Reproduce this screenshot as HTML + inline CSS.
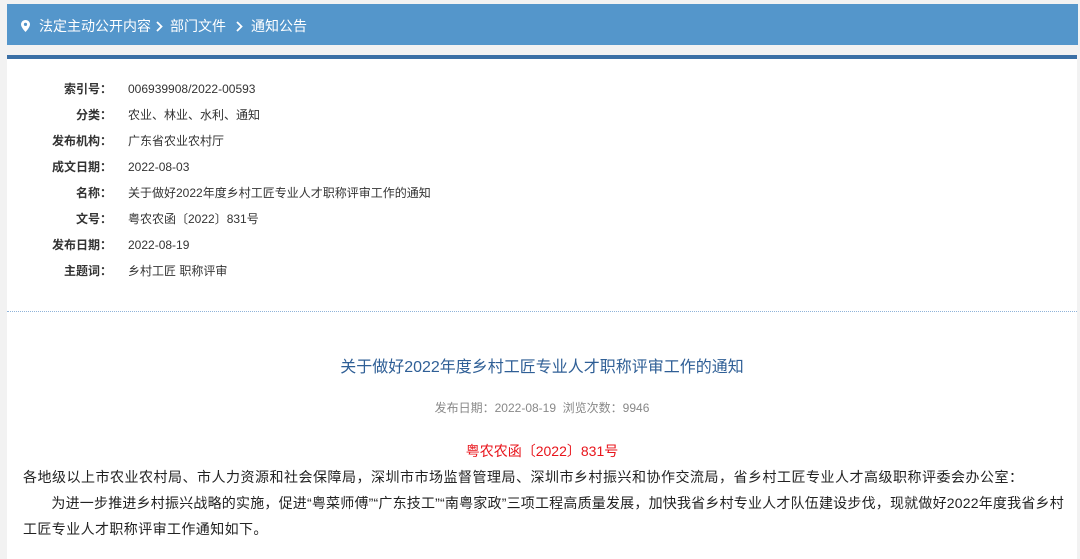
<!DOCTYPE html>
<html><head><meta charset="utf-8"><style>
body{margin:0;width:1080px;height:535px;overflow:hidden;background:#f2f2f2;font-family:"Liberation Sans","Noto Sans CJK SC",sans-serif;}
.hdr{position:absolute;left:7px;top:4px;width:1071px;height:41px;background:#5496cb;color:#fff;font-size:14px;line-height:44px;}
.hdr span{position:absolute;top:0}
.panel{position:absolute;left:7px;top:55px;width:1070px;height:500px;background:#fff;border-top:4px solid #3a6fa5;}
.lab{position:absolute;left:0;width:105px;text-align:right;font-weight:bold;color:#333;font-size:12px;line-height:16px}
.val{position:absolute;left:121px;font-size:12px;color:#333;white-space:nowrap;line-height:16px}
</style></head><body>
<div class="hdr">
<svg style="position:absolute;left:14px;top:16px" width="9" height="12" viewBox="0 0 9 12"><path d="M4.5 0C2 0 0 2 0 4.4 0 7.5 4.5 12 4.5 12S9 7.5 9 4.4C9 2 7 0 4.5 0z" fill="#fff"/><circle cx="4.5" cy="4.4" r="1.6" fill="#5496cb"/></svg>
<span style="left:32px">法定主动公开内容</span>
<svg style="position:absolute;left:149px;top:17px" width="7" height="11"><path d="M1 1l4.5 4.5L1 10" stroke="#fff" stroke-width="1.8" fill="none"/></svg>
<span style="left:163px">部门文件</span>
<svg style="position:absolute;left:229px;top:17px" width="7" height="11"><path d="M1 1l4.5 4.5L1 10" stroke="#fff" stroke-width="1.8" fill="none"/></svg>
<span style="left:244px">通知公告</span>
</div>
<div class="panel">
<div style="position:absolute;top:22px;left:0;width:1000px">
<div class="lab" style="top:0">索引号：</div><div class="val" style="top:0">006939908/2022-00593</div>
<div class="lab" style="top:26px">分类：</div><div class="val" style="top:26px">农业、林业、水利、通知</div>
<div class="lab" style="top:52px">发布机构：</div><div class="val" style="top:52px">广东省农业农村厅</div>
<div class="lab" style="top:78px">成文日期：</div><div class="val" style="top:78px">2022-08-03</div>
<div class="lab" style="top:104px">名称：</div><div class="val" style="top:104px">关于做好2022年度乡村工匠专业人才职称评审工作的通知</div>
<div class="lab" style="top:130px">文号：</div><div class="val" style="top:130px">粤农农函〔2022〕831号</div>
<div class="lab" style="top:156px">发布日期：</div><div class="val" style="top:156px">2022-08-19</div>
<div class="lab" style="top:182px">主题词：</div><div class="val" style="top:182px">乡村工匠 职称评审</div>
</div>
<div style="position:absolute;left:0;top:252px;width:1070px;border-top:1px dotted #8fb3d9"></div>
<div style="position:absolute;left:0;top:294px;width:1070px;text-align:center;font-size:16px;color:#2f5f96">关于做好2022年度乡村工匠专业人才职称评审工作的通知</div>
<div style="position:absolute;left:0;top:340px;width:1070px;text-align:center;font-size:12px;color:#888">发布日期：2022-08-19&nbsp; 浏览次数：9946</div>
<div style="position:absolute;left:0;top:382px;width:1070px;text-align:center;font-size:14px;color:#e8141b">粤农农函〔2022〕831号</div>
<div style="position:absolute;left:16px;top:405px;width:1070px;font-size:14px;color:#222;line-height:26px;white-space:nowrap"><span style="letter-spacing:0.5px">各地级以上市农业农村局、市人力资源和社会保障局，深圳市市场监督管理局、深圳市乡村振兴和协作交流局，省乡村工匠专业人才高级职称评委会办公室：</span><br><span style="letter-spacing:0.2px">&emsp;&emsp;为进一步推进乡村振兴战略的实施，促进“粤菜师傅”“广东技工”“南粤家政”三项工程高质量发展，加快我省乡村专业人才队伍建设步伐，现就做好2022年度我省乡村</span><br><span style="letter-spacing:0.4px">工匠专业人才职称评审工作通知如下。</span></div>
</div>
</body></html>
